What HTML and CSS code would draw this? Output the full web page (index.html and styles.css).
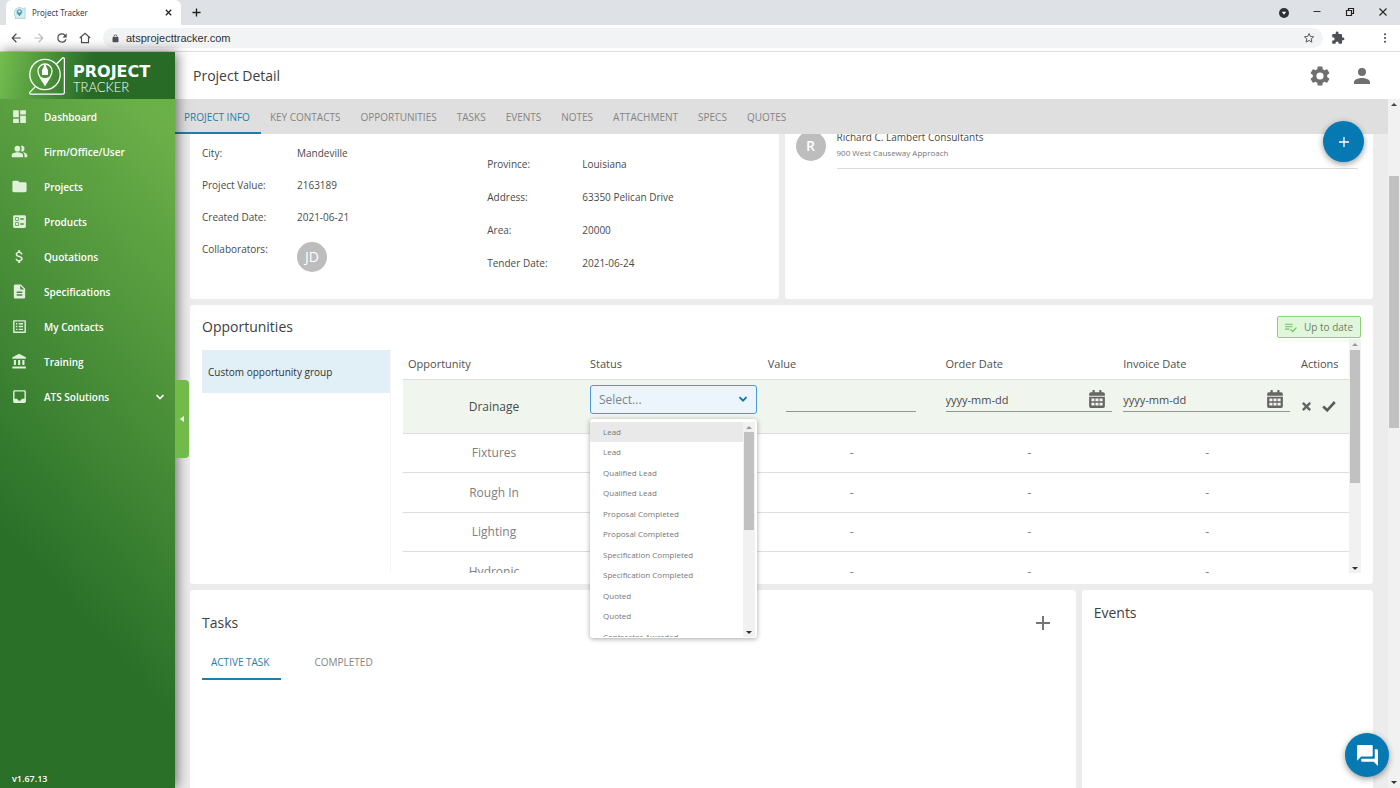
FILE: index.html
```html
<!DOCTYPE html>
<html lang="en">
<head>
<meta charset="utf-8">
<meta name="viewport" content="width=device-width, initial-scale=1">
<title>Project Tracker</title>
<link rel="stylesheet" href="styles.css">
</head>
<body>
<header class="browser">
  <div class="tabstrip">
    <div class="browser-tab">
      <svg class="favicon" viewBox="0 0 40 40"><path d="M6 33 A16 16 0 1 1 31 7 L37 2 V38 H3 Z" fill="#d9edf3" stroke="#8cc0cf" stroke-width="2"/><circle cx="18" cy="18" r="11" fill="#b5d9e4"/><path d="M18 31c-4-7-8-10-8-15a8 8 0 0 1 16 0c0 5-4 8-8 15z" fill="#3e8ea5"/><circle cx="18" cy="15" r="4" fill="#e6f4f7"/></svg>
      <span class="browser-tab-title">Project Tracker</span>
      <button class="chrome-btn tab-close" aria-label="Close tab"><svg viewBox="0 0 10 10"><path d="M2 2l6 6M8 2L2 8" stroke="#222" stroke-width="1.4"/></svg></button>
    </div>
    <button class="chrome-btn new-tab" aria-label="New tab"><svg viewBox="0 0 10 10"><path d="M5 .5v9M.5 5h9" stroke="#222" stroke-width="1.5"/></svg></button>
    <div class="window-controls">
      <button class="chrome-btn" aria-label="Search tabs"><svg viewBox="0 0 12 12"><circle cx="6" cy="6" r="5" fill="#2e3136"/><path d="M3.8 4.8h4.4L6 7.800z" fill="#fff"/></svg></button>
      <button class="chrome-btn" aria-label="Minimize"><svg viewBox="0 0 12 12"><path d="M2.500 4.500h7" stroke="#333" stroke-width="1"/></svg></button>
      <button class="chrome-btn" aria-label="Restore"><svg viewBox="0 0 12 12"><path d="M2.500 3.500h5v5h-5zM4.500 3.500v-2h5v5h-2" fill="none" stroke="#222" stroke-width="1.200"/></svg></button>
      <button class="chrome-btn" aria-label="Close"><svg viewBox="0 0 12 12"><path d="M2.500 1.500l7 7M9.500 1.500l-7 7" stroke="#222" stroke-width="1.100"/></svg></button>
    </div>
  </div>
  <div class="toolbar">
    <button class="chrome-btn nav-btn" aria-label="Back"><svg viewBox="0 0 24 24"><path d="M20 11H7.830l5.590-5.590L12 4l-8 8 8 8 1.410-1.410L7.830 13H20v-2z" fill="#4a4d51"/></svg></button>
    <button class="chrome-btn nav-btn" aria-label="Forward"><svg viewBox="0 0 24 24"><path d="M12 4l-1.410 1.410L16.170 11H4v2h12.170l-5.580 5.590L12 20l8-8z" fill="#bcbec1"/></svg></button>
    <button class="chrome-btn nav-btn" aria-label="Reload"><svg viewBox="0 0 24 24"><path d="M17.650 6.350A7.960 7.960 0 0 0 12 4a8 8 0 1 0 7.730 10h-2.080A6 6 0 1 1 12 6c1.660 0 3.140.69 4.220 1.780L13 11h7V4l-2.350 2.350z" fill="#4a4d51"/></svg></button>
    <button class="chrome-btn nav-btn" aria-label="Home"><svg viewBox="0 0 24 24"><path d="M3 12L12 4l9 8M6 10.500V20h12v-9.500" fill="none" stroke="#4a4d51" stroke-width="2"/></svg></button>
    <div class="address">
      <svg class="lock" viewBox="0 0 24 24"><path d="M18 8h-1V6A5 5 0 0 0 7 6v2H6a2 2 0 0 0-2 2v10a2 2 0 0 0 2 2h12a2 2 0 0 0 2-2V10a2 2 0 0 0-2-2zM9 6a3 3 0 0 1 6 0v2H9z" fill="#4d5156"/></svg>
      <input class="url" type="text" value="atsprojecttracker.com" aria-label="Address">
      <svg class="star" viewBox="0 0 24 24"><path d="M12 3l2.700 6 6.500.6-4.900 4.300 1.500 6.400-5.800-3.400-5.800 3.400 1.500-6.400-4.900-4.300 6.500-.6z" fill="none" stroke="#4d5156" stroke-width="1.900"/></svg>
    </div>
    <button class="chrome-btn nav-btn" aria-label="Extensions"><svg viewBox="0 0 24 24"><path d="M20.500 11H19V7c0-1.100-.9-2-2-2h-4V3.500a2.500 2.500 0 0 0-5 0V5H4c-1.100 0-1.990.9-1.990 2v3.800H3.500a2.700 2.700 0 0 1 0 5.400H2V20c0 1.100.9 2 2 2h3.800v-1.500a2.700 2.700 0 0 1 5.400 0V22H17c1.100 0 2-.9 2-2v-4h1.500a2.500 2.500 0 0 0 0-5z" fill="#4d5156"/></svg></button>
    <button class="chrome-btn nav-btn menu-btn" aria-label="Browser menu"><svg viewBox="0 0 24 24"><circle cx="12" cy="3" r="2.600" fill="#4d5156"/><circle cx="12" cy="12" r="2.600" fill="#4d5156"/><circle cx="12" cy="21" r="2.600" fill="#4d5156"/></svg></button>
  </div>
</header>

<div class="app">
  <aside class="sidebar">
    <div class="brand">
      <svg class="brand-mark" viewBox="0 0 36 38" fill="none" stroke="#fff" stroke-width="1.300"><circle cx="16" cy="17.500" r="15.200"/><path d="M27.500 7L33 1.500C34.500.2 35.400.6 35.400 2.200V35.400c0 1.100-.7 1.800-1.800 1.800H2.400C.5 37.200.2 36 1.200 34.900L6.500 29.500"/><path d="M16 28c-2.500-5-7-8.500-7-14a7 7 0 0 1 14 0c0 5.500-4.500 9-7 14z"/><path d="M16 27.500l-3-6.500c2 1 4 1 6 0z" fill="#fff"/><path d="M13 18v-5l1.200-2 1.200-3.500h1.200l1.200 3.500 1.200 2v5z" fill="#fff" stroke="none"/></svg>
      <div class="brand-name"><strong>PROJECT</strong><span>TRACKER</span></div>
    </div>
    <nav class="side-nav">
      <a href="#" class="side-link"><svg viewBox="0 0 24 24"><path d="M3 13h8V3H3v10zm0 8h8v-6H3v6zm10 0h8V11h-8v10zm0-18v6h8V3h-8z"/></svg><span>Dashboard</span></a>
      <a href="#" class="side-link"><svg viewBox="0 0 24 24"><path d="M16.670 13.130C18.040 14.060 19 15.320 19 17v3h4v-3c0-2.180-3.570-3.470-6.330-3.870zM15 12a4 4 0 0 0 0-8c-.47 0-.91.1-1.330.24a5.980 5.980 0 0 1 0 7.520c.42.14.86.24 1.330.24zM9 12a4 4 0 1 0 0-8 4 4 0 0 0 0 8zm0 1c-2.670 0-8 1.340-8 4v3h16v-3c0-2.660-5.330-4-8-4z"/></svg><span>Firm/Office/User</span></a>
      <a href="#" class="side-link"><svg viewBox="0 0 24 24"><path d="M10 4H4c-1.100 0-1.990.9-1.990 2L2 18c0 1.100.9 2 2 2h16c1.100 0 2-.9 2-2V8c0-1.100-.9-2-2-2h-8l-2-2z"/></svg><span>Projects</span></a>
      <a href="#" class="side-link"><svg viewBox="0 0 24 24"><path fill-rule="evenodd" d="M13 9.500h5v-2h-5v2zm0 7h5v-2h-5v2zm6 4.500H5c-1.100 0-2-.9-2-2V5c0-1.100.9-2 2-2h14c1.100 0 2 .9 2 2v14c0 1.100-.9 2-2 2zM6 11h5V6H6v5zm1-4h3v3H7V7zM6 18h5v-5H6v5zm1-4h3v3H7v-3z"/></svg><span>Products</span></a>
      <a href="#" class="side-link"><svg viewBox="0 0 24 24"><path d="M11.800 10.900c-2.270-.59-3-1.200-3-2.150 0-1.090 1.010-1.850 2.700-1.850 1.780 0 2.440.85 2.500 2.100h2.210c-.07-1.720-1.120-3.300-3.210-3.810V3h-3v2.160c-1.940.42-3.500 1.680-3.500 3.610 0 2.310 1.910 3.460 4.700 4.130 2.500.6 3 1.480 3 2.410 0 .69-.49 1.790-2.700 1.790-2.060 0-2.870-.92-2.980-2.100h-2.200c.12 2.190 1.760 3.420 3.680 3.830V21h3v-2.150c1.950-.37 3.500-1.500 3.500-3.550 0-2.840-2.430-3.810-4.700-4.400z"/></svg><span>Quotations</span></a>
      <a href="#" class="side-link"><svg viewBox="0 0 24 24"><path d="M14 2H6c-1.100 0-1.990.9-1.990 2L4 20c0 1.100.89 2 1.990 2H18c1.100 0 2-.9 2-2V8l-6-6zm2 16H8v-2h8v2zm0-4H8v-2h8v2zm-3-5V3.500L18.500 9H13z"/></svg><span>Specifications</span></a>
      <a href="#" class="side-link"><svg viewBox="0 0 24 24"><path d="M19 5v14H5V5h14m1.100-2H3.900c-.5 0-.9.4-.9.9v16.200c0 .4.4.9.9.9h16.200c.4 0 .9-.5.9-.9V3.900c0-.5-.5-.9-.9-.9zM11 7h6v2h-6V7zm0 4h6v2h-6v-2zm0 4h6v2h-6zM7 7h2v2H7zm0 4h2v2H7zm0 4h2v2H7z"/></svg><span>My Contacts</span></a>
      <a href="#" class="side-link"><svg viewBox="0 0 24 24"><path d="M4 10v7h3v-7H4zm6 0v7h3v-7h-3zM2 22h19v-3H2v3zm14-12v7h3v-7h-3zm-4.500-9L2 6v2h19V6l-9.500-5z"/></svg><span>Training</span></a>
      <a href="#" class="side-link"><svg viewBox="0 0 24 24"><path d="M19 3H4.990c-1.110 0-1.980.89-1.980 2L3 19c0 1.100.88 2 1.990 2H19c1.100 0 2-.9 2-2V5c0-1.110-.9-2-2-2zm0 12h-4a3 3 0 0 1-6 0H4.990V5H19v10z"/></svg><span>ATS Solutions</span><svg class="side-chevron" viewBox="0 0 10 10"><path d="M1.500 3L5 6.500 8.500 3" fill="none" stroke="#fff" stroke-width="1.600"/></svg></a>
    </nav>
    <div class="version">v1.67.13</div>
    <button class="side-handle" aria-label="Collapse menu"><svg viewBox="0 0 6 8"><path d="M5 1v6L1 4z" fill="#fff"/></svg></button>
  </aside>

  <main class="main">
    <div class="topbar">
      <h1 class="page-title">Project Detail</h1>
      <button class="icon-btn" aria-label="Settings"><svg viewBox="0 0 24 24"><path d="M19.140 12.940c.04-.3.060-.61.060-.94 0-.32-.02-.64-.07-.94l2.030-1.580c.18-.14.23-.41.12-.61l-1.920-3.320c-.12-.22-.37-.29-.59-.22l-2.390.96c-.5-.38-1.030-.7-1.620-.94l-.36-2.540c-.04-.24-.24-.41-.48-.41h-3.840c-.24 0-.43.17-.47.41l-.36 2.540c-.59.24-1.130.57-1.620.94l-2.390-.96c-.22-.08-.47 0-.59.22L2.740 8.870c-.12.21-.08.47.12.61l2.030 1.580c-.05.3-.09.63-.09.94s.02.64.07.94l-2.030 1.580c-.18.14-.23.41-.12.61l1.920 3.320c.12.22.37.29.59.22l2.390-.96c.5.38 1.030.7 1.620.94l.36 2.540c.05.24.24.41.48.41h3.840c.24 0 .44-.17.47-.41l.36-2.540c.59-.24 1.130-.56 1.620-.94l2.390.96c.22.080.47 0 .59-.22l1.920-3.320c.12-.22.070-.47-.12-.61l-2.010-1.580zM12 15.600a3.600 3.600 0 1 1 0-7.200 3.600 3.600 0 0 1 0 7.200z"/></svg></button>
      <button class="icon-btn" aria-label="Account"><svg viewBox="0 0 24 24"><path d="M12 12a4 4 0 1 0 0-8 4 4 0 0 0 0 8zm0 2c-2.670 0-8 1.340-8 4v2h16v-2c0-2.660-5.330-4-8-4z"/></svg></button>
    </div>
    <div class="viewport">
      <div class="page">
        <nav class="section-tabs">
          <button class="section-tab is-active">PROJECT INFO</button>
          <button class="section-tab">KEY CONTACTS</button>
          <button class="section-tab">OPPORTUNITIES</button>
          <button class="section-tab">TASKS</button>
          <button class="section-tab">EVENTS</button>
          <button class="section-tab">NOTES</button>
          <button class="section-tab">ATTACHMENT</button>
          <button class="section-tab">SPECS</button>
          <button class="section-tab">QUOTES</button>
        </nav>
        <div class="scroll-area">
          <div class="cards">
            <div class="row row-info">
              <section class="card info">
                <dl class="facts">
                  <dt>City:</dt><dd>Mandeville</dd>
                  <dt>Project Value:</dt><dd>2163189</dd>
                  <dt>Created Date:</dt><dd>2021-06-21</dd>
                  <dt>Collaborators:</dt><dd><span class="avatar">JD</span></dd>
                </dl>
                <dl class="facts facts-wide">
                  <dt>Province:</dt><dd>Louisiana</dd>
                  <dt>Address:</dt><dd>63350 Pelican Drive</dd>
                  <dt>Area:</dt><dd>20000</dd>
                  <dt>Tender Date:</dt><dd>2021-06-24</dd>
                </dl>
              </section>
              <section class="card contacts">
                <span class="avatar">R</span>
                <div class="contact">
                  <div class="contact-name">Richard C. Lambert Consultants</div>
                  <div class="contact-address">900 West Causeway Approach</div>
                </div>
              </section>
            </div>

            <section class="card opportunities">
              <div class="card-head">
                <h2>Opportunities</h2>
                <span class="badge"><svg viewBox="0 0 24 24"><path d="M2 5h14v2H2zM2 9.500h14v2H2zM2 14h8v2H2z" fill="#6cc658"/><path d="M12 15.500l4 4 7-7.500" fill="none" stroke="#6cc658" stroke-width="2.200"/></svg>Up to date</span>
              </div>
              <div class="opp-body">
                <div class="groups"><button class="group">Custom opportunity group</button></div>
                <div class="opp-pane">
                  <div class="table-clip">
                    <table class="opp-table">
                      <colgroup><col class="c-name"><col><col><col><col><col class="c-actions"></colgroup>
                      <thead><tr><th>Opportunity</th><th>Status</th><th>Value</th><th>Order Date</th><th>Invoice Date</th><th>Actions</th></tr></thead>
                      <tbody>
                        <tr class="editing">
                          <td>Drainage</td>
                          <td class="edit-cell">
                            <div class="select-wrap">
                              <select class="status-select" aria-label="Status"><option>Select...</option><option>Lead</option><option>Qualified Lead</option><option>Proposal Completed</option><option>Specification Completed</option><option>Quoted</option></select>
                              <svg class="select-arrow" viewBox="0 0 10 10"><path d="M1.500 3.200L5 6.700l3.500-3.500" fill="none" stroke="#0b78ad" stroke-width="1.900"/></svg>
                            </div>
                            <div class="menu">
                              <ul class="menu-list" role="listbox" aria-label="Status options">
                                <li class="is-hover" role="option">Lead</li><li role="option">Lead</li><li role="option">Qualified Lead</li><li role="option">Qualified Lead</li><li role="option">Proposal Completed</li><li role="option">Proposal Completed</li><li role="option">Specification Completed</li><li role="option">Specification Completed</li><li role="option">Quoted</li><li role="option">Quoted</li><li role="option">Contractor Awarded</li>
                              </ul>
                              <div class="scrollbar"><i class="arrow up dim"></i><div class="track"><div class="thumb thumb-menu"></div></div><i class="arrow down"></i></div>
                            </div>
                          </td>
                          <td class="edit-cell"><input class="line-input value-input" type="text" aria-label="Value"></td>
                          <td class="edit-cell"><div class="date-field"><input type="text" value="yyyy-mm-dd" aria-label="Order date"><button aria-label="Pick order date"><svg class="calendar" viewBox="0 0 448 512"><path fill-rule="evenodd" d="M0 464a48 48 0 0 0 48 48h352a48 48 0 0 0 48-48V192H0v272zM64 244h88v76H64zM180 244h88v76h-88zM296 244h88v76h-88zM64 364h88v76H64zM180 364h88v76h-88zM296 364h88v76h-88zM400 64h-48V16a16 16 0 0 0-16-16h-32a16 16 0 0 0-16 16v48H160V16a16 16 0 0 0-16-16h-32a16 16 0 0 0-16 16v48H48a48 48 0 0 0-48 48v48h448v-48a48 48 0 0 0-48-48z"/></svg></button></div></td>
                          <td class="edit-cell"><div class="date-field"><input type="text" value="yyyy-mm-dd" aria-label="Invoice date"><button aria-label="Pick invoice date"><svg class="calendar" viewBox="0 0 448 512"><path fill-rule="evenodd" d="M0 464a48 48 0 0 0 48 48h352a48 48 0 0 0 48-48V192H0v272zM64 244h88v76H64zM180 244h88v76h-88zM296 244h88v76h-88zM64 364h88v76H64zM180 364h88v76h-88zM296 364h88v76h-88zM400 64h-48V16a16 16 0 0 0-16-16h-32a16 16 0 0 0-16 16v48H160V16a16 16 0 0 0-16-16h-32a16 16 0 0 0-16 16v48H48a48 48 0 0 0-48 48v48h448v-48a48 48 0 0 0-48-48z"/></svg></button></div></td>
                          <td class="actions-cell"><div class="actions"><button aria-label="Cancel"><svg viewBox="0 0 12 12"><path d="M2 2l8 8M10 2l-8 8" stroke="#636363" stroke-width="2.600"/></svg></button><button aria-label="Save"><svg class="save" viewBox="0 0 14 12"><path d="M1.200 6.500l4 3.800L12.800 2" fill="none" stroke="#5b5b5b" stroke-width="2.600"/></svg></button></div></td>
                        </tr>
                        <tr><td>Fixtures</td><td></td><td>-</td><td>-</td><td>-</td><td></td></tr>
                        <tr><td>Rough In</td><td></td><td>-</td><td>-</td><td>-</td><td></td></tr>
                        <tr><td>Lighting</td><td></td><td>-</td><td>-</td><td>-</td><td></td></tr>
                        <tr><td>Hydronic</td><td></td><td>-</td><td>-</td><td>-</td><td></td></tr>
                      </tbody>
                    </table>
                  </div>
                  <div class="scrollbar"><i class="arrow up dim"></i><div class="track"><div class="thumb thumb-table"></div></div><i class="arrow down"></i></div>
                </div>
              </div>
            </section>

            <div class="row row-bottom">
              <section class="card tasks">
                <div class="card-head"><h2>Tasks</h2><button class="add-task" aria-label="Add task"><svg viewBox="0 0 14 14"><path d="M7 0v14M0 7h14" stroke="#757575" stroke-width="2"/></svg></button></div>
                <div class="task-tabs"><button class="task-tab is-active">ACTIVE TASK</button><button class="task-tab">COMPLETED</button></div>
              </section>
              <section class="card events"><h2>Events</h2></section>
            </div>
          </div>
        </div>
        <button class="fab fab-add" aria-label="Add"><svg viewBox="0 0 10 10"><path d="M5 0v10M0 5h10" stroke="#fff" stroke-width="1.300"/></svg></button>
      </div>
      <div class="scrollbar page-scroll"><i class="arrow up"></i><div class="track"><div class="thumb thumb-page"></div></div><i class="arrow down"></i></div>
    </div>
    <button class="fab fab-chat" aria-label="Chat"><svg viewBox="0 0 24 24"><path d="M21 6h-2v9H6v2c0 .55.45 1 1 1h11l4 4V7c0-.55-.45-1-1-1zm-4 6V3c0-.55-.45-1-1-1H3c-.55 0-1 .45-1 1v14l4-4h10c.55 0 1-.45 1-1z" fill="#fff"/></svg></button>
  </main>
</div>
</body>
</html>
```

FILE: styles.css
```css
* { box-sizing: border-box; }
body { margin: 0; height: 100vh; display: flex; flex-direction: column; overflow: hidden; font-family: "Open Sans", "Noto Sans", sans-serif; font-size: 10px; color: #4a4a4a; background: #fff; }
button { font: inherit; color: inherit; background: none; border: 0; padding: 0; margin: 0; cursor: pointer; }
input, select { font: inherit; color: inherit; }
svg { display: block; }
h1, h2, dl, dd, ul { margin: 0; padding: 0; font-weight: 400; }
h1, h2 { font-size: 14px; line-height: 22px; color: #404040; }

.browser { flex: none; border-bottom: 1px solid #dcdde0; }
.tabstrip { display: flex; align-items: center; height: 25px; background: #dee1e6; padding-left: 6px; }
.browser-tab { display: flex; align-items: center; align-self: stretch; width: 175px; background: #fff; border-radius: 6px 6px 0 0; padding: 0 8px; gap: 6px; }
.favicon { width: 12px; height: 12px; }
.browser-tab-title { flex: 1; font-family: "Noto Sans", sans-serif; font-size: 8px; color: #3c4043; }
.chrome-btn { display: grid; place-items: center; }
.tab-close svg { width: 9px; height: 9px; }
.new-tab { margin-left: 11px; }
.new-tab svg { width: 9px; height: 9px; }
.window-controls { display: flex; margin-left: auto; gap: 21px; padding-right: 11px; }
.window-controls svg { width: 12px; height: 12px; }
.toolbar { display: flex; align-items: center; height: 26px; padding: 0 7px 0 8px; gap: 7px; background: #fff; }
.nav-btn { width: 16px; }
.nav-btn svg { width: 14px; height: 14px; }
.nav-btn.menu-btn { margin-left: 24px; }
.menu-btn svg { width: 10px; height: 10px; }
.address { flex: 1; display: flex; align-items: center; height: 20px; margin-left: 3px; border-radius: 10px; background: #f1f3f4; padding: 0 8px; gap: 6px; }
.lock { width: 9px; height: 9px; }
.url { flex: 1; border: 0; padding: 0; background: none; outline: 0; font-family: "Liberation Sans", Arial, sans-serif; font-size: 11px; color: #303338; }
.star { width: 12px; height: 12px; }

.app { flex: 1; min-height: 0; display: flex; }
.sidebar { position: relative; z-index: 5; flex: none; width: 175px; display: flex; flex-direction: column; background: linear-gradient(228deg, #6db54a 0%, #6aaf48 10%, #2a7029 72%); box-shadow: 2px 0 12px rgba(0, 0, 0, .55); }
.brand { display: flex; align-items: center; gap: 8px; height: 47px; padding-left: 29px; background: linear-gradient(100deg, #74bd4f 0%, #276b27 52%); }
.brand-mark { width: 36px; height: 38px; }
.brand-name { display: flex; flex-direction: column; color: #fff; padding-top: 6px; }
.brand-name strong { font: 700 16px/17px "DejaVu Sans", sans-serif; }
.brand-name span { font: 300 13px/15px Lato, sans-serif; }
.side-nav { flex: 1; }
.side-link { display: flex; align-items: center; height: 35px; padding: 0 10px 0 11px; color: #fff; text-decoration: none; font-weight: 600; }
.side-link svg { width: 17px; height: 17px; fill: #dff0db; }
.side-link span { flex: 1; padding-left: 16px; }
.side-link .side-chevron { width: 10px; height: 10px; }
.version { padding: 0 12px 3px; color: #fff; font-weight: 600; font-size: 9px; }
.side-handle { position: absolute; left: 100%; top: 328px; width: 14px; height: 78px; display: grid; place-items: center; background: #72bb4b; border-radius: 0 4px 4px 0; }
.side-handle svg { width: 6px; height: 8px; }

.main { position: relative; flex: 1; min-width: 0; display: flex; flex-direction: column; }
.topbar { display: flex; align-items: center; height: 47px; padding: 0 26px 0 18px; gap: 18px; }
.page-title { flex: 1; }
.icon-btn svg { width: 24px; height: 24px; fill: #6f6f6f; }
.viewport { flex: 1; min-height: 0; display: flex; }
.page { position: relative; flex: 1; min-width: 0; display: flex; flex-direction: column; background: #ececec; }
.section-tabs { display: flex; height: 35px; background: #dfdfdf; }
.section-tab { padding: 2px 11px 0 9px; font-size: 10px; color: #858585; border-bottom: 2px solid transparent; white-space: nowrap; }
.section-tab.is-active { color: #1c7fae; border-bottom-color: #1c7fae; }
.scroll-area { flex: 1; min-height: 0; overflow: hidden; }
.cards { display: flex; flex-direction: column; gap: 6px; height: 100%; padding: 0 15px; }
.card { background: #fff; border-radius: 3px; }
.row { display: grid; gap: 6px; }
.row-info { grid-template-columns: 1fr 1fr; flex: none; min-height: 173px; margin-top: -8px; }
.row-bottom { grid-template-columns: 76fr 25fr; flex: 1; }
.row-bottom .card { border-radius: 3px 3px 0 0; }

.info { display: grid; grid-template-columns: 1fr 1fr; gap: 6px; padding: 11px 12px 0; }
.facts { display: grid; grid-template-columns: 95px 1fr; align-content: start; line-height: 32px; }
.facts-wide { padding-top: 11px; line-height: 33px; }
.avatar { display: grid; place-items: center; width: 30px; height: 30px; border-radius: 50%; background: #bdbdbd; color: #fff; font-size: 14px; line-height: 20px; }
.facts .avatar { margin-top: 9px; }
.contacts { display: flex; align-items: flex-start; gap: 11px; padding: 5px 15px 0 11px; }
.contacts .avatar { font-weight: 600; }
.contact { flex: 1; border-bottom: 1px solid #dcdcdc; height: 38px; }
.contact-name { line-height: 12px; }
.contact-address { font-size: 8px; line-height: 20px; color: #777; }

.card-head { display: flex; align-items: center; justify-content: space-between; }
.opportunities { padding: 11px 12px; flex: none; }
.badge { display: flex; align-items: center; gap: 7px; height: 22px; padding: 0 7px 0 6px; border: 1px solid #8ed27f; border-radius: 2px; background: #e1f7dc; color: #6f7f6c; }
.badge svg { width: 13px; height: 13px; }
.opp-body { display: flex; gap: 12px; margin-top: 1px; }
.groups { flex: none; width: 189px; margin-top: 11px; border-right: 1px solid #f6f6f6; }
.group { display: block; width: 100%; height: 43px; padding: 0 6px; text-align: left; background: #e1eff6; color: #333; }
.opp-pane { position: relative; flex: 1; min-width: 0; display: flex; height: 234px; }
.table-clip { flex: 1; min-width: 0; overflow: hidden; }
.opp-table { width: 100%; table-layout: fixed; border-collapse: collapse; font-size: 12px; color: #808080; }
.c-name { width: 182px; }
.c-actions { width: 53px; }
.opp-table th { height: 40px; padding: 10px 5px 0; text-align: left; font-size: 11px; font-weight: 400; color: #505050; border-bottom: 1px solid #dedede; white-space: nowrap; }
.opp-table td { height: 39px; padding: 0; text-align: center; border-bottom: 1px solid #dedede; }
.opp-table tr:nth-child(odd) td { height: 40px; }
.opp-table tr.editing td { height: 54px; background: #f0f6ee; color: #4a4a4a; }
.opp-table tr.editing .edit-cell { vertical-align: top; padding: 5px 6px 0 5px; }
.select-wrap { display: grid; align-items: center; }
.select-wrap > * { grid-area: 1 / 1; }
.status-select { appearance: none; width: 100%; height: 29px; padding: 0 8px; border: 1px solid #4a9ade; border-radius: 3px; background: #ebf5fb; color: #7b868c; outline: 0; }
.select-arrow { width: 10px; height: 10px; justify-self: end; margin-right: 9px; pointer-events: none; }
.menu { position: absolute; z-index: 4; display: flex; width: 167px; height: 219px; margin-top: 5px; padding: 3px 2px 1px 0; background: #fff; border-radius: 3px; box-shadow: 0 1px 5px rgba(0, 0, 0, .35); }
.menu-list { flex: 1; overflow: hidden; list-style: none; text-align: left; font-size: 8px; line-height: 20px; color: #777; }
.menu-list li { height: 20px; padding-left: 13px; }
.menu-list li:nth-child(even) { margin-bottom: 1px; }
.menu-list .is-hover { background: #e9e9e9; }
.line-input { border: 0; border-bottom: 1px solid #949494; background: none; outline: 0; }
.value-input { width: 130px; height: 27px; }
.date-field { display: flex; align-items: center; height: 27px; padding-top: 3px; border-bottom: 1px solid #949494; }
.date-field input { flex: 1; min-width: 0; padding: 0; border: 0; background: none; outline: 0; font-size: 11px; }
.date-field button { padding-right: 7px; }
.calendar { width: 16px; height: 18px; fill: #666; }
.actions { display: flex; gap: 10px; padding-left: 5px; align-items: center; }
.actions svg { width: 11px; height: 11px; }
.actions .save { width: 14px; height: 12px; }

.scrollbar { flex: none; display: flex; flex-direction: column; align-items: center; width: 12px; background: #f1f1f1; padding: 3px 0; }
.track { flex: 1; align-self: stretch; padding: 4px 1px; }
.thumb { background: #c1c1c1; }
.thumb-page { height: 252px; margin-top: 66px; }
.thumb-table { height: 133px; }
.thumb-menu { height: 98px; }
.menu .track { padding-top: 3px; }
.arrow { width: 0; height: 0; border: 3px solid transparent; }
.arrow.up { border-top: 0; border-bottom: 3px solid #444; margin-top: 1px; }
.arrow.down { border-bottom: 0; border-top: 3px solid #333; }
.arrow.dim { border-bottom-color: #999; }
.page-scroll .arrow.down { margin-bottom: 1px; }

.tasks { padding: 22px 12px 0; }
.add-task { margin-right: 14px; }
.add-task svg { width: 14px; height: 14px; }
.task-tabs { display: flex; gap: 24px; margin-top: 12px; }
.task-tab { height: 34px; padding: 0 12px 0 9px; color: #858585; border-bottom: 2px solid transparent; }
.task-tab.is-active { color: #1c7fae; border-bottom-color: #1c7fae; }
.events { padding: 12px 12px 0; }

.fab { position: absolute; z-index: 3; display: grid; place-items: center; border-radius: 50%; background: #0679b3; box-shadow: 0 2px 6px rgba(0, 0, 0, .4); }
.fab-add { top: 22px; right: 24px; width: 41px; height: 41px; }
.fab-add svg { width: 10px; height: 10px; }
.fab-chat { right: 11px; bottom: 11px; width: 44px; height: 44px; }
.fab-chat svg { width: 25px; height: 25px; }
```
